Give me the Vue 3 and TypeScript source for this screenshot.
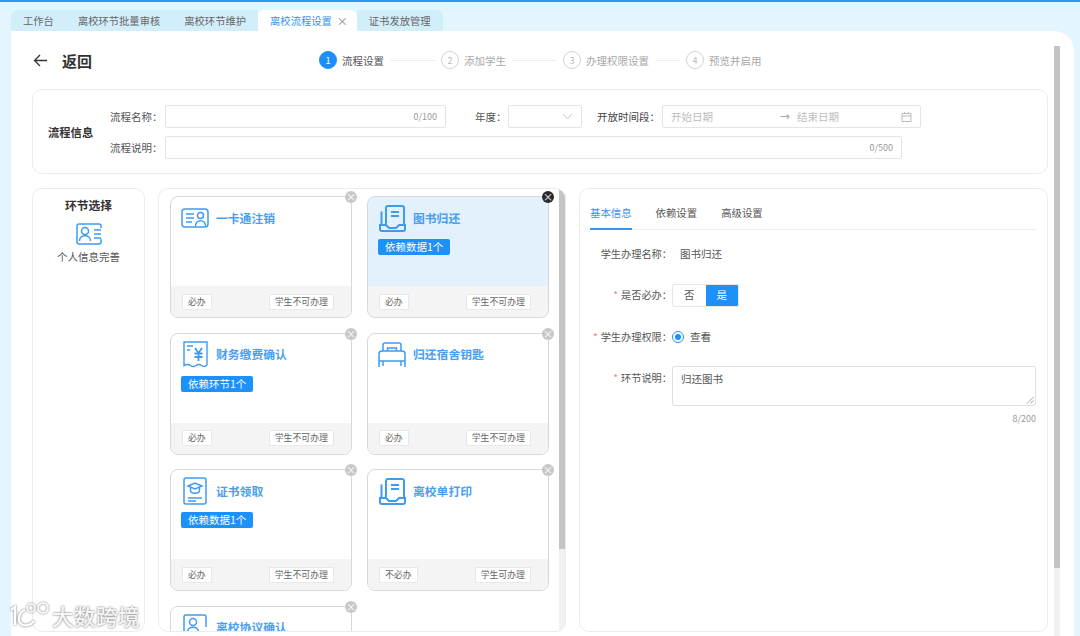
<script setup lang="ts">
type IconName = 'card' | 'book' | 'receipt' | 'bed' | 'cert' | 'agree'
interface Item {
  title: string
  icon: IconName
  badge?: string
  must: string
  perm: string
  active?: boolean
}
const tabs = ['工作台', '离校环节批量审核', '离校环节维护', '离校流程设置', '证书发放管理']
const steps = ['流程设置', '添加学生', '办理权限设置', '预览并启用']
const items: Item[] = [
  { title: '一卡通注销', icon: 'card', must: '必办', perm: '学生不可办理' },
  { title: '图书归还', icon: 'book', badge: '依赖数据1个', must: '必办', perm: '学生不可办理', active: true },
  { title: '财务缴费确认', icon: 'receipt', badge: '依赖环节1个', must: '必办', perm: '学生不可办理' },
  { title: '归还宿舍钥匙', icon: 'bed', must: '必办', perm: '学生不可办理' },
  { title: '证书领取', icon: 'cert', badge: '依赖数据1个', must: '必办', perm: '学生不可办理' },
  { title: '离校单打印', icon: 'book', must: '不必办', perm: '学生可办理' },
  { title: '离校协议确认', icon: 'agree', must: '必办', perm: '学生不可办理' }
]
</script>

<template>
  <div class="page">
    <nav class="tabs">
      <div v-for="(t, i) in tabs" :key="t" class="tab" :class="{ on: i === 3 }">
        {{ t }}<span v-if="i === 3" class="tab-x">×</span>
      </div>
    </nav>
    <main class="main">
      <header class="head">
        <div class="back">
          <svg width="15" height="13" viewBox="0 0 15 13" fill="none" stroke="#333" stroke-width="1.3"><path d="M14 6.5H1.5M7 1 1.5 6.5 7 12" /></svg>
          <span>返回</span>
        </div>
        <ol class="steps">
          <li v-for="(s, i) in steps" :key="s" class="step" :class="{ on: i === 0 }">
            <i class="num">{{ i + 1 }}</i>
            <span>{{ s }}</span>
            <b v-if="i < 3" class="dash" :class="'d' + i"></b>
          </li>
        </ol>
      </header>

      <section class="info">
        <h3>流程信息</h3>
        <div class="rows">
          <div class="row">
            <label class="l1">流程名称：</label>
            <div class="input w1"><em>0/100</em></div>
            <label class="l2">年度：</label>
            <div class="input w2">
              <svg width="11" height="7" viewBox="0 0 11 7" fill="none" stroke="#c4c4c4"><path d="m1 1 4.500 5L10 1" /></svg>
            </div>
            <label class="l3">开放时间段：</label>
            <div class="input w3">
              <span class="ph a">开始日期</span><span class="arr">→</span><span class="ph">结束日期</span>
              <svg class="cal" width="11" height="11" viewBox="0 0 11 11" fill="none" stroke="#bbb"><path d="M1 2.500h9v8H1zM1 5h9M3.500 1v2M7.500 1v2" /></svg>
            </div>
          </div>
          <div class="row">
            <label class="l1">流程说明：</label>
            <div class="input w4"><em>0/500</em></div>
          </div>
        </div>
      </section>

      <div class="panels">
        <aside class="panel left">
          <h4>环节选择</h4>
          <svg width="28" height="22" viewBox="0 0 28 22" fill="none" stroke="#3f9bf0" stroke-width="1.5">
            <path d="M26 16v3a2 2 0 0 1-2 2H4a2 2 0 0 1-2-2V3a2 2 0 0 1 2-2h20a2 2 0 0 1 2 2v2" />
            <circle cx="10" cy="8" r="3.500" />
            <path d="M4.500 18c0-7 11-7 11 0M19 7h7M19 11h7M19 15h7" />
          </svg>
          <p>个人信息完善</p>
        </aside>

        <section class="panel center">
          <div class="grid">
            <article v-for="it in items" :key="it.title" class="card" :class="{ act: it.active }">
              <span class="close">×</span>
              <div class="body">
                <div class="ctitle">
                  <span class="ico">
                    <svg v-if="it.icon === 'card'" width="28" height="20" viewBox="0 0 28 20" fill="none" stroke="#3f9bf0" stroke-width="1.5">
                      <rect x="1" y="1" width="26" height="18" rx="3" />
                      <path d="M5 6h8M5 10h8M5 14h6" />
                      <circle cx="19.500" cy="7.500" r="3" />
                      <path d="M14.500 18c0-7 10-7 10 0" />
                    </svg>
                    <svg v-else-if="it.icon === 'book'" width="27" height="27" viewBox="0 0 27 27" fill="none" stroke="#3f9bf0" stroke-width="2">
                      <path d="M7 20V3a2 2 0 0 1 2-2h14a2 2 0 0 1 2 2v17" />
                      <path d="M2.500 20V6.500M12 7h8M12 11h8" />
                      <path d="M1 20h6l3 3h7l3-3h6v4a2 2 0 0 1-2 2H3a2 2 0 0 1-2-2z" />
                    </svg>
                    <svg v-else-if="it.icon === 'receipt'" width="25" height="27" viewBox="0 0 25 27" fill="none" stroke="#3f9bf0" stroke-width="1.4">
                      <path d="M1 1h23v23c-2 2-3.500 2-5.500 .5s-3.500-1.500-5.500 0-3.500 1.500-5.500 0-3.500-1.500-6.500 0z" />
                      <path d="M4 5h6M4 9h3" />
                      <path stroke-width="1.8" d="M12 7l3.500 5L19 7M11.500 12.500h8M11.500 16h8M15.500 12v8" />
                    </svg>
                    <svg v-else-if="it.icon === 'bed'" width="28" height="25" viewBox="0 0 28 25" fill="none" stroke="#3f9bf0" stroke-width="1.5">
                      <path d="M5 9V3a2 2 0 0 1 2-2h14a2 2 0 0 1 2 2v6" />
                      <path d="M9.500 9V6h9v3M1 25V12a3 3 0 0 1 3-3h20a3 3 0 0 1 3 3v13M1 19h26M5 19v5M23 19v5" />
                    </svg>
                    <svg v-else-if="it.icon === 'cert'" width="24" height="28" viewBox="0 0 24 28" fill="none" stroke="#3f9bf0" stroke-width="1.5">
                      <rect x="1" y="1" width="22" height="26" rx="2" />
                      <path d="m5 9 7-3 7 3-7 3zM7.500 10.500v3c0 3.500 9 3.500 9 0v-3M5 21h14M5 24h8" />
                    </svg>
                    <svg v-else width="24" height="27" viewBox="0 0 24 27" fill="none" stroke="#3f9bf0" stroke-width="1.500">
                      <path d="M23 13V3a2 2 0 0 0-2-2H3a2 2 0 0 0-2 2v22" />
                      <circle cx="10" cy="8" r="3.500" />
                      <path d="M4.500 18c0-6.500 11-6.500 11 0M23 17v2" />
                    </svg>
                  </span>
                  <strong>{{ it.title }}</strong>
                </div>
                <span v-if="it.badge" class="badge">{{ it.badge }}</span>
              </div>
              <footer class="foot">
                <span class="tag">{{ it.must }}</span>
                <span class="tag">{{ it.perm }}</span>
              </footer>
            </article>
          </div>
          <div class="bar"><i></i></div>
        </section>

        <section class="panel right">
          <div class="rtabs">
            <span class="on">基本信息</span><span>依赖设置</span><span>高级设置</span>
          </div>
          <div class="form">
            <div class="f f1"><label>学生办理名称：</label><span class="val">图书归还</span></div>
            <div class="f f2">
              <label><s>*</s>是否必办：</label>
              <div class="seg"><span>否</span><span class="sel">是</span></div>
            </div>
            <div class="f f3">
              <label><s>*</s>学生办理权限：</label>
              <i class="radio"></i><span class="val2">查看</span>
            </div>
            <div class="f f4">
              <label><s>*</s>环节说明：</label>
              <div class="ta">
                归还图书
                <svg width="8" height="8" viewBox="0 0 8 8" stroke="#888" stroke-width=".8"><path d="M7.500 1 1 7.500M7.500 4.500l-3 3" /></svg>
              </div>
            </div>
            <div class="count">8/200</div>
          </div>
        </section>
      </div>
      <div class="vbar"><i></i></div>
    </main>

    <div class="mark">
      <svg width="42" height="30" viewBox="0 0 42 30" fill="none" stroke="#fff" stroke-width="2.200">
        <path d="M3 9l4-3v18M17 9c-6 2-8 10-4 14 4 3 10 1 13-3" />
        <circle cx="23" cy="7" r="4" stroke-width="1.500" />
        <circle cx="35" cy="7" r="5" stroke-width="1.500" />
      </svg>
      <span>大数跨境</span>
    </div>
  </div>
</template>

<style>
html, body { margin: 0; overflow: hidden; }
</style>

<style scoped>
* { box-sizing: border-box; }
.page {
  position: relative;
  width: 1080px;
  height: 636px;
  overflow: hidden;
  display: flex;
  flex-direction: column;
  background: #e3f5ff;
  border-top: 2px solid #2e98f3;
  font-family: "Noto Sans CJK SC", "Noto Sans", sans-serif;
  font-size: 10.5px;
  color: #555;
}
.tabs { display: flex; margin: 8px 0 0 11px; height: 21px; font-size: 10.300px; }
.tab {
  display: flex;
  align-items: center;
  padding: 0 12px;
  background: #d3eefb;
  color: #666;
}
.tab:first-child { border-radius: 6px 0 0 0; }
.tab:last-child { border-radius: 0 6px 0 0; }
.tab.on { background: #fff; color: #3a94ea; border-radius: 6px 6px 0 0; }
.tab-x { display: inline-block; width: 8px; margin-left: 5px; font-size: 11px; line-height: 12px; text-align: center; color: #888; }
.main {
  position: relative;
  flex: 1;
  margin: 0 6px 0 11px;
  padding: 0 26px 0 21px;
  background: #fff;
  border-radius: 0 20px 0 0;
}
.head { display: flex; align-items: center; height: 58px; }
.back { display: flex; align-items: center; width: 287px; padding-left: 1px; gap: 14px; font-size: 15px; font-weight: 700; color: #333; }
.steps { display: flex; align-items: center; margin: 0; padding: 0; list-style: none; }
.step { display: flex; align-items: center; color: #a8a8a8; }
.step.on { color: #555; }
.num {
  display: flex;
  align-items: center;
  justify-content: center;
  width: 18px;
  height: 18px;
  margin-right: 5px;
  border: 1px solid #d4d4d4;
  border-radius: 50%;
  font-style: normal;
  font-size: 9px;
  color: #bbb;
}
.step.on .num { background: #1e8ffa; border-color: #1e8ffa; color: #fff; }
.dash { display: block; height: 1px; background: #eee; margin: 0 6px; width: 45px; }
.dash.d2 { width: 25px; margin: 0 6px 0 6px; }
.info {
  display: flex;
  align-items: center;
  height: 85px;
  padding-left: 15px;
  border: 1px solid #ececec;
  border-radius: 10px;
}
.info h3 { width: 62px; margin: 0; font-size: 11.300px; font-weight: 700; color: #333; }
.rows { display: flex; flex-direction: column; gap: 8px; }
.row { display: flex; align-items: center; height: 23px; }
.l1 { width: 55px; }
.l2 { width: 33px; margin-left: 29px; }
.l3 { width: 65px; margin-left: 15px; margin-right: 0; color: #444; }
.input {
  position: relative;
  display: flex;
  align-items: center;
  justify-content: flex-end;
  height: 23px;
  padding: 0 8px;
  border: 1px solid #e4e4e4;
  border-radius: 2px;
  color: #aaa;
}
.input em { font-style: normal; font-size: 9px; color: #999; }
.w1 { width: 281px; }
.w2 { width: 74px; }
.w3 { width: 259px; justify-content: flex-start; }
.w4 { width: 737px; }
.ph { color: #bdbdbd; }
.ph.a { width: 109px; }
.arr { width: 17px; color: #999; font-size: 10px; }
.cal { position: absolute; right: 8px; top: 5px; }
.panels { display: flex; margin-top: 14px; height: 444px; }
.panel { border: 1px solid #ececec; border-radius: 10px; }
.left { display: flex; flex-direction: column; align-items: center; width: 113px; margin-right: 13px; }
.left h4 { margin: 7px 0 9px; font-size: 11.800px; line-height: 18px; font-weight: 700; color: #333; }
.left p { margin: 5px 0 0; line-height: 14px; }
.center { position: relative; width: 408px; margin-right: 13px; overflow: hidden; }
.grid {
  display: grid;
  grid-template-columns: 182px 182px;
  grid-auto-rows: 122px;
  column-gap: 15px;
  row-gap: 14.500px;
  padding: 7px 0 0 11px;
}
.card {
  position: relative;
  display: flex;
  flex-direction: column;
  border: 1px solid #d8d8d8;
  border-radius: 8px;
}
.card.act { background: #e3f1fd; }
.close {
  position: absolute;
  top: -6px;
  right: -6px;
  width: 12px;
  height: 12px;
  border-radius: 50%;
  background: #c8c8c8;
  color: #fff;
  font-size: 10px;
  line-height: 12px;
  text-align: center;
}
.act .close { background: #2b2b2b; }
.body { flex: 1; padding: 6px 10px 0; }
.ctitle { display: flex; align-items: center; height: 30px; }
.ico { display: flex; justify-content: center; align-items: center; width: 28px; margin-right: 7px; }
.ctitle strong { padding-bottom: 2px; font-size: 11.800px; font-weight: 700; color: #4a9ff0; }
.badge {
  display: inline-block;
  margin-top: 6px;
  height: 16px;
  padding: 0 7px;
  border-radius: 2px;
  background: #1e90fa;
  color: #fff;
  line-height: 16px;
}
.foot {
  display: flex;
  align-items: center;
  justify-content: space-between;
  height: 31px;
  padding: 0 17px 0 11px;
  background: #f4f4f4;
  border-radius: 0 0 7px 7px;
}
.tag {
  height: 16px;
  padding: 0 5px;
  background: #fff;
  border: 1px solid #e8e8e8;
  line-height: 14px;
  font-size: 8.900px;
  color: #666;
}
.bar { position: absolute; top: 0; right: 0; bottom: 0; width: 6px; background: #f1f1f1; }
.bar i { display: block; height: 360px; background: #c4c4c4; }
.right { flex: 1; padding: 0 11px 0 10px; }
.rtabs { display: flex; gap: 24px; height: 41px; border-bottom: 1px solid #eee; font-size: 10.400px; }
.rtabs span { height: 41px; line-height: 48px; color: #555; }
.rtabs .on { color: #3a94ea; border-bottom: 2px solid #2e98f3; }
.f { display: flex; align-items: center; }
.f label { width: 82px; text-align: right; white-space: nowrap; font-size: 10.200px; }
.f1 label, .f2 label, .f3 label, .val, .val2 { padding-bottom: 2px; }
.f s { margin-right: 3px; text-decoration: none; color: #e98585; }
.f1 { margin-top: 15px; height: 18px; }
.val { margin-left: 8px; color: #555; }
.f2 { margin-top: 21px; height: 23px; }
.seg { display: flex; width: 67px; height: 23px; border: 1px solid #e8e8e8; border-radius: 2px; overflow: hidden; }
.seg span { flex: 1; line-height: 20px; text-align: center; }
.seg .sel { background: #1e90fa; color: #fff; }
.f3 { margin-top: 21px; height: 18px; }
.radio { width: 12px; height: 12px; border: 1px solid #1e90fa; border-radius: 50%; display: flex; align-items: center; justify-content: center; }
.radio::after { content: ""; width: 6px; height: 6px; border-radius: 50%; background: #1e90fa; }
.val2 { margin-left: 6px; }
.f4 { margin-top: 20px; align-items: flex-start; }
.f4 label { line-height: 24px; }
.ta {
  position: relative;
  flex: 1;
  height: 40px;
  padding: 4px 8px;
  border: 1px solid #e0e0e0;
  border-radius: 2px;
  line-height: 15px;
}
.ta svg { position: absolute; right: 1px; bottom: 1px; }
.count { margin-top: 6px; text-align: right; font-size: 9px; color: #999; }
.vbar { position: absolute; top: 15px; left: 1043px; bottom: 0; width: 6px; background: #f1f1f1; }
.vbar i { display: block; height: 522px; background: #c4c4c4; }
.mark {
  position: absolute;
  left: 8px;
  bottom: 5px;
  display: flex;
  align-items: center;
  gap: 2px;
  filter: drop-shadow(0 0 1px #6f6f6f);
}
.mark span {
  font-size: 21.500px;
  line-height: 26px;
  letter-spacing: .5px;
  font-weight: 500;
  color: #f6f6f6;
}
</style>
